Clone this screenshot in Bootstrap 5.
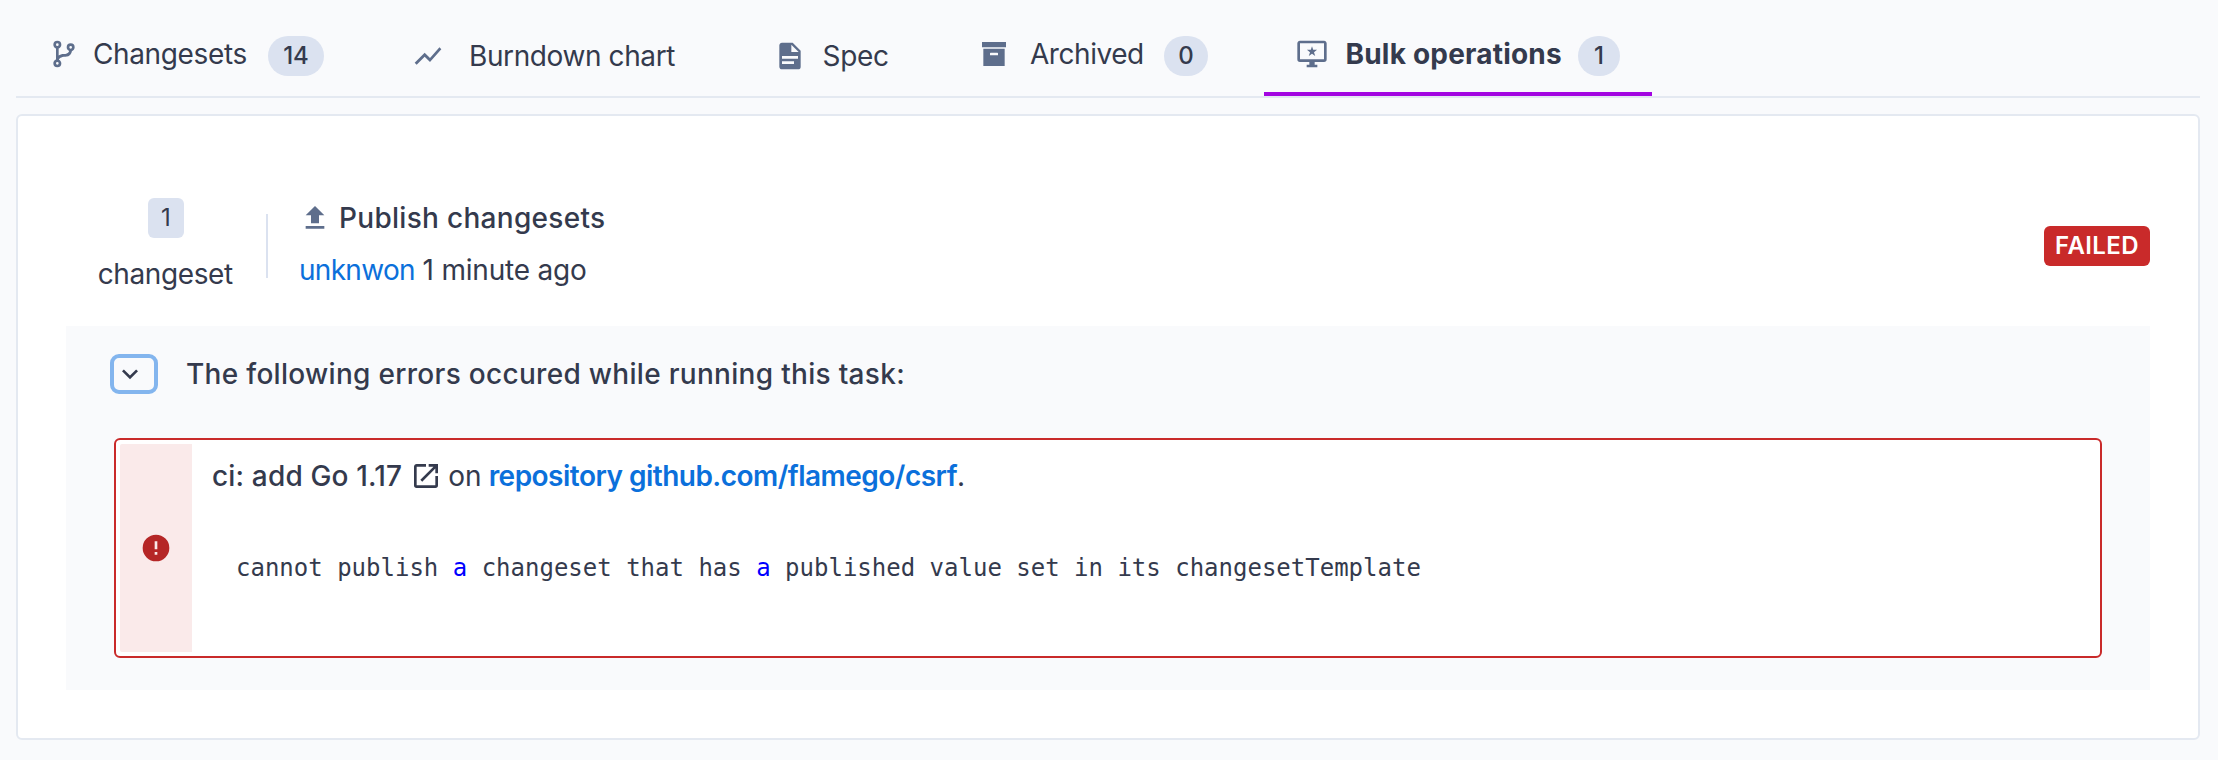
<!DOCTYPE html>
<html lang="en">
<head>
<meta charset="utf-8">
<meta name="viewport" content="width=device-width, initial-scale=1">
<title>Bulk operations</title>
<link href="https://cdn.jsdelivr.net/npm/bootstrap@5.3.0/dist/css/bootstrap.min.css" rel="stylesheet">
<style>
body{background:#f9fafc;color:#343a4d;font-family:Inter,"Liberation Sans",sans-serif;font-size:28px;line-height:40px;height:760px;overflow:hidden}
a{color:#0b70db;text-decoration:none}
.ico{width:32px;height:32px;flex:none;fill:#5e6e8c;display:block}
.medium{font-weight:500;letter-spacing:.3px}

.tabbar{height:98px;margin:0 18px 0 16px;border-bottom:2px solid #e4e9f1;display:grid;grid-template-columns:364px 361.5px 204.5px 318px 388px}
.tabbar .nav-link{color:inherit;height:96px;padding:34px 0 0 32px;display:flex;align-items:flex-start;white-space:nowrap}
.tabbar .nav-link.low{padding-top:36px}
.tabbar .nav-link.active{border-bottom:4px solid #a305e1}
.tabbar .nav-link.active .txt{font-weight:700;letter-spacing:.2px}
.tabbar .ico{margin-top:4px}
.t-changesets{margin-left:13px;width:175px;letter-spacing:-.37px}
.t-burndown{margin-left:25px;letter-spacing:-.4px}
.t-spec{margin-left:17px;letter-spacing:-.3px}
.t-archived{margin-left:20px;width:134px;letter-spacing:-.45px}
.t-bulk{margin-left:17.5px;width:232.5px}
.count{background:#dbe2f0;font-size:24px;font-weight:500;height:40px;width:44px;text-align:center;margin-top:2px;border-radius:20px}
.count.wide{width:56px}
.count.slim{width:42px}

.panel-card{margin:16px 18px 0 16px;height:626px;background:#fff;border:2px solid #e4e9f1;border-radius:6px;padding:82px 48px 0}
.summary{height:128px}
.total{width:134px;margin-left:33px}
.total .unit{letter-spacing:-.4px;margin-right:1.5px}
.num{background:#dbe2f0;font-size:24px;width:36px;height:40px;border-radius:6px}
.rule{width:2px;height:64px;margin:16px 31px 0 33px;background:#dbe2f0}
.byline{margin-top:12px;letter-spacing:-.2px}
.byline a{letter-spacing:-.7px}
.state{background:#c92a2a;color:#fff;font-size:24px;font-weight:600;letter-spacing:.4px;width:106px;height:40px;border-radius:6px;margin-top:28px}

.errors{background:#f9fafc;height:364px;padding:28px 48px 0}
.toggle{width:48px;height:40px;border:4px solid #83b5ee;border-radius:9px;margin-left:-4px;background:#f9fafc;padding:0}
.toggle .ico{fill:#343a4d}
.failure{height:220px;margin-top:44px;background:#fff;border:2px solid #c92a2a;border-radius:6px;padding:4px}
.stripe{width:72px;background:#faeaea;border-radius:2px 0 0 2px}
.stripe .ico{fill:#b52626}
.title-line{padding:12px 0 0 20px;white-space:nowrap}
.title-line .ico{fill:#343a4d;margin:0 6px 0 8px}
.title-line .medium{letter-spacing:.17px}
.title-line a{font-weight:600;letter-spacing:-.52px;margin-left:7px}
.output{font:24px/36px "DejaVu Sans Mono",monospace;margin:54px 0 0 44px;color:#343a4d;overflow:visible}
.output b{font-weight:400;color:#00f}
</style>
</head>
<body>
<nav class="tabbar">
  <a class="nav-link" href="#">
    <svg class="ico" viewBox="0 0 24 24"><path d="M13,14C9.64,14 8.54,15.35 8.18,16.24C9.25,16.7 10,17.76 10,19A3,3 0 0,1 7,22A3,3 0 0,1 4,19C4,17.69 4.83,16.58 6,16.17V7.83C4.83,7.42 4,6.31 4,5A3,3 0 0,1 7,2A3,3 0 0,1 10,5C10,6.31 9.17,7.42 8,7.83V13.12C8.88,12.47 10.16,12 12,12C14.67,12 15.56,10.66 15.85,9.77C14.77,9.32 14,8.25 14,7A3,3 0 0,1 17,4A3,3 0 0,1 20,7C20,8.34 19.12,9.5 17.91,9.86C17.65,11.29 16.68,14 13,14M7,18A1,1 0 0,0 6,19A1,1 0 0,0 7,20A1,1 0 0,0 8,19A1,1 0 0,0 7,18M7,4A1,1 0 0,0 6,5A1,1 0 0,0 7,6A1,1 0 0,0 8,5A1,1 0 0,0 7,4M17,6A1,1 0 0,0 16,7A1,1 0 0,0 17,8A1,1 0 0,0 18,7A1,1 0 0,0 17,6Z"/></svg>
    <span class="txt t-changesets">Changesets</span><span class="count wide">14</span>
  </a>
  <a class="nav-link low" href="#">
    <svg class="ico" viewBox="0 0 24 24"><path d="M3.5,18.49L9.5,12.48L13.5,16.48L22,6.92L20.59,5.51L13.5,13.48L9.5,9.48L2,16.99L3.5,18.49Z"/></svg>
    <span class="txt t-burndown">Burndown chart</span>
  </a>
  <a class="nav-link low" href="#">
    <svg class="ico" viewBox="0 0 24 24"><path d="M13,9H18.5L13,3.5V9M6,2H14L20,8V20A2,2 0 0,1 18,22H6C4.89,22 4,21.1 4,20V4C4,2.89 4.89,2 6,2M15,18V16H6V18H15M18,14V12H6V14H18Z"/></svg>
    <span class="txt t-spec">Spec</span>
  </a>
  <a class="nav-link" href="#">
    <svg class="ico" viewBox="0 0 24 24"><path d="M3,3H21V7H3V3M4,8H20V21H4V8M9.5,11A0.5,0.5 0 0,0 9,11.5V13H15V11.5A0.5,0.5 0 0,0 14.5,11H9.5Z"/></svg>
    <span class="txt t-archived">Archived</span><span class="count">0</span>
  </a>
  <a class="nav-link active" href="#">
    <svg class="ico" viewBox="0 0 24 24"><path d="M21,16H3V4H21M21,2H3C1.89,2 1,2.89 1,4V16A2,2 0 0,0 3,18H10V20H8V22H16V20H14V18H21A2,2 0 0,0 23,16V4C23,2.89 22.1,2 21,2M12,6.2L12.9,8.9H15.8L13.5,10.7L14.4,13.5L12,11.8L9.6,13.5L10.5,10.7L8.2,8.9H11.1Z"/></svg>
    <span class="txt t-bulk">Bulk operations</span><span class="count slim">1</span>
  </a>
</nav>

<main class="panel-card">
  <div class="summary d-flex align-items-start">
    <div class="total d-flex flex-column align-items-center">
      <span class="num text-center">1</span>
      <span class="unit mt-3">changeset</span>
    </div>
    <div class="rule"></div>
    <div>
      <div class="d-flex medium"><svg class="ico mt-1" viewBox="0 0 24 24"><path d="M9,16V10H5L12,3L19,10H15V16H9M5,20V18H19V20H5Z"/></svg><span class="ms-1 ps-1">Publish changesets</span></div>
      <div class="byline"><a href="#">unknwon</a> 1 minute ago</div>
    </div>
    <span class="state text-center ms-auto">FAILED</span>
  </div>

  <section class="errors">
    <div class="d-flex">
      <button class="toggle" type="button" aria-label="Collapse"><svg class="ico" viewBox="0 0 24 24"><path d="M7.41,8.58L12,13.17L16.59,8.58L18,10L12,16L6,10L7.41,8.58Z"/></svg></button>
      <span class="medium ms-4 ps-1">The following errors occured while running this task:</span>
    </div>
    <div class="failure d-flex">
      <div class="stripe d-flex align-items-center justify-content-center"><svg class="ico" viewBox="0 0 24 24"><path d="M13,13H11V7H13M13,17H11V15H13M12,2A10,10 0 0,0 2,12A10,10 0 0,0 12,22A10,10 0 0,0 22,12A10,10 0 0,0 12,2Z"/></svg></div>
      <div>
        <div class="title-line d-flex align-items-center"><span class="medium">ci: add Go 1.17</span><svg class="ico" viewBox="0 0 24 24"><path d="M14,3V5H17.59L7.76,14.83L9.17,16.24L19,6.41V10H21V3M19,19H5V5H12V3H5C3.89,3 3,3.9 3,5V19A2,2 0 0,0 5,21H19A2,2 0 0,0 21,19V12H19V19Z"/></svg><span>on</span><a href="#">repository github.com/flamego/csrf</a><span>.</span></div>
        <pre class="output">cannot publish <b>a</b> changeset that has <b>a</b> published value set in its changesetTemplate</pre>
      </div>
    </div>
  </section>
</main>
<script src="https://cdn.jsdelivr.net/npm/bootstrap@5.3.0/dist/js/bootstrap.bundle.min.js"></script>
</body>
</html>
